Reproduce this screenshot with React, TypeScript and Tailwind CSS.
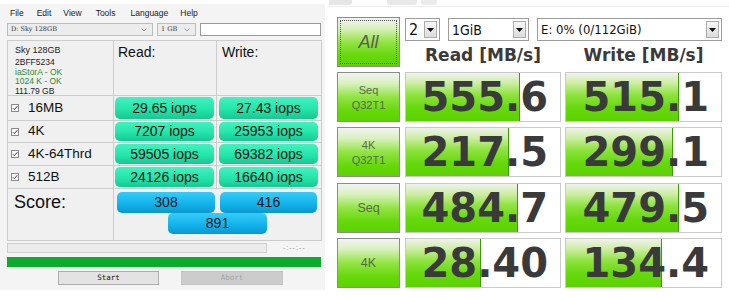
import React from "react";

const teal =
  "bg-[linear-gradient(to_bottom,#40f3c0_0%,#24e5aa_55%,#16c892_100%)]";
const blue =
  "bg-[linear-gradient(to_bottom,#34cdf9_0%,#14b3ec_55%,#0899cf_100%)]";

function Check() {
  return (
    <svg width="8" height="8" viewBox="0 0 8 8" className="shrink-0">
      <rect x="0.5" y="0.5" width="7" height="7" fill="#fafafa" stroke="#8a8a8a" />
      <path d="M1.8 4.2 L3.3 5.7 L6.3 2.2" fill="none" stroke="#444" strokeWidth="1" />
    </svg>
  );
}

function IopsBtn({ v }: { v: string }) {
  return (
    <div
      className={`h-full w-full rounded-[5px] ${teal} flex items-center justify-center text-[14px] text-[#111] font-['Liberation_Sans',sans-serif]`}
    >
      {v}
    </div>
  );
}

function LeftPanel() {
  const rows = [
    { l: "16MB", r: "29.65 iops", w: "27.43 iops" },
    { l: "4K", r: "7207 iops", w: "25953 iops" },
    { l: "4K-64Thrd", r: "59505 iops", w: "69382 iops" },
    { l: "512B", r: "24126 iops", w: "16640 iops" },
  ];
  return (
    <div className="w-[329px] h-[298px] shrink-0 bg-white">
      <div className="mt-[4px] w-[325px] h-[286px] bg-[#f4f4f4] flex flex-col font-['Liberation_Sans',sans-serif]">
        <div className="h-[18px] flex items-center pl-[10px] text-[8.5px] text-[#222]">
          <span>File</span>
          <span className="ml-[13px]">Edit</span>
          <span className="ml-[12px]">View</span>
          <span className="ml-[14px]">Tools</span>
          <span className="ml-[15px]">Language</span>
          <span className="ml-[12px]">Help</span>
        </div>
        <div className="mt-[1px] h-[13px] flex ml-[7px]">
          <div className="w-[146px] h-full bg-[#ececec] border border-[#bdbdbd] flex items-center justify-between pl-[3px] pr-[5px]">
            <span className="text-[6.5px] text-[#333] font-['DejaVu_Serif',serif]">D: Sky 128GB</span>
            <svg width="6" height="4" viewBox="0 0 6 4"><path d="M0.5 0.5 L3 3 L5.5 0.5" fill="none" stroke="#888" strokeWidth="0.8" /></svg>
          </div>
          <div className="ml-[4px] w-[39px] h-full bg-[#ececec] border border-[#bdbdbd] flex items-center justify-between pl-[3px] pr-[5px]">
            <span className="text-[6.5px] text-[#333] font-['DejaVu_Serif',serif]">1 GB</span>
            <svg width="6" height="4" viewBox="0 0 6 4"><path d="M0.5 0.5 L3 3 L5.5 0.5" fill="none" stroke="#888" strokeWidth="0.8" /></svg>
          </div>
          <div className="ml-[4px] w-[121px] h-full bg-white border border-[#9a9a9a]" />
        </div>
        <div className="mt-[4px] ml-[7px] w-[315px] grid grid-cols-[105px_102px_104px] grid-rows-[54px_24px_21px_22px_22px_51px] gap-px p-px bg-[#cdcdcd]">
          <div className="bg-[#f0f0f0] pl-[7px] pt-[4px] text-[8.5px] leading-[9.5px] text-[#222]">
            <div className="text-[9px] leading-[11px]">Sky 128GB</div>
            <div className="mt-[2px]">2BFF5234</div>
            <div className="text-[#2d8a2d]">iaStorA - OK</div>
            <div className="text-[#2d8a2d]">1024 K - OK</div>
            <div>111.79 GB</div>
          </div>
          <div className="bg-[#f0f0f0] pl-[4px] pt-[3px] text-[14px] leading-[16px] text-[#111]">Read:</div>
          <div className="bg-[#f0f0f0] pl-[5px] pt-[3px] text-[14px] leading-[16px] text-[#111]">Write:</div>
          {rows.map((r) => (
            <React.Fragment key={r.l}>
              <div className="bg-[#f0f0f0] flex items-center pl-[3px] gap-[9px] text-[13.5px] text-[#111]">
                <Check />
                <span>{r.l}</span>
              </div>
              <div className="bg-[#f0f0f0] pt-[1px] pb-[1px] pl-[1px] pr-[2px]">
                <IopsBtn v={r.r} />
              </div>
              <div className="bg-[#f0f0f0] pt-[1px] pb-[1px] pl-[2px] pr-[3px]">
                <IopsBtn v={r.w} />
              </div>
            </React.Fragment>
          ))}
          <div className="bg-[#f0f0f0] pl-[6px] pt-[4px] text-[18px] leading-[18px] text-[#111]">Score:</div>
          <div className="col-span-2 bg-[#f0f0f0] pt-[3px] pl-[3px] flex flex-col">
            <div className="flex gap-[5px]">
              <div className={`w-[98px] h-[21px] rounded-[5px] ${blue} flex items-center justify-center text-[14px] text-[#111]`}>308</div>
              <div className={`w-[97px] h-[21px] rounded-[5px] ${blue} flex items-center justify-center text-[14px] text-[#111]`}>416</div>
            </div>
            <div className={`ml-[51px] w-[99px] h-[21px] rounded-[5px] ${blue} flex items-center justify-center text-[14px] text-[#111]`}>891</div>
          </div>
        </div>
        <div className="mt-[2px] ml-[7px] h-[10px] flex items-center">
          <div className="w-[260px] h-full bg-[#ebebeb] border border-[#cfcfcf]" />
          <span className="ml-[16px] text-[7px] text-[#9a9a9a] tracking-[1px]">-:--:--</span>
        </div>
        <div className="mt-[4px] ml-[7px] w-[314px] h-[10px] bg-[#0cab2c]" />
        <div className="mt-[4px] h-[14px] flex">
          <div className="ml-[58px] w-[101px] h-full bg-[#e3e3e3] border border-[#adadad] flex items-center justify-center text-[7.5px] text-[#111] font-['DejaVu_Sans_Mono',monospace]">Start</div>
          <div className="ml-[22px] w-[102px] h-full bg-[#cccccc] border border-[#c4c4c4] flex items-center justify-center text-[7.5px] text-[#a4a4a4] font-['DejaVu_Sans_Mono',monospace]">Abort</div>
        </div>
      </div>
    </div>
  );
}

const btnGrad =
  "bg-[linear-gradient(to_bottom,#f3f3f3_0%,#d8f1bd_22%,#92e444_50%,#66d80c_78%,#5cd300_100%)]";
const fillGrad =
  "bg-[linear-gradient(to_bottom,#f0f2ec_0%,#cfeea8_20%,#8fe340_45%,#66d90c_72%,#5bd200_100%)]";

function Arrow() {
  return (
    <div className="w-[13px] h-full border border-[#adadad] bg-[linear-gradient(to_bottom,#f7f7f7,#dcdcdc)] flex items-center justify-center">
      <svg width="7" height="4" viewBox="0 0 7 4"><path d="M0 0 L7 0 L3.5 4 Z" fill="#111" /></svg>
    </div>
  );
}

function Drop({ w, text, size }: { w: string; text: string; size: string }) {
  return (
    <div className={`${w} h-[23px] bg-white border border-[#9c9c9c] flex items-center justify-between pl-[3px] pr-[2px] py-[2px]`}>
      <span className={`${size} text-[#111] font-['DejaVu_Sans_Condensed','Liberation_Sans',sans-serif] leading-none`}>{text}</span>
      <Arrow />
    </div>
  );
}

function LabelBtn({ a, b, big }: { a: string; b?: string; big?: boolean }) {
  return (
    <div className={`w-[63px] h-full border border-[#8c8c8c] ${btnGrad} flex flex-col items-center justify-center text-[#566a48] font-['Liberation_Sans',sans-serif]`}>
      <span className={big ? "text-[12.5px] leading-[14px]" : "text-[11px] leading-[14px]"}>{a}</span>
      {b && <span className="text-[11px] leading-[14px] mt-[1px]">{b}</span>}
    </div>
  );
}

function ValBox({ v, pct, w }: { v: string; pct: number; w: string }) {
  return (
    <div className={`${w} h-full bg-white border border-[#cacaca] relative overflow-hidden`}>
      <div
        className={`absolute left-0 top-0 bottom-0 ${fillGrad} border-r border-[#3c9c00]`}
        style={{ width: `${pct}%` }}
      />
      <div className="relative h-full flex items-center justify-end pr-[12px] text-[40px] leading-none font-bold text-[#3a3a3a] font-['DejaVu_Sans',sans-serif]">
        {v}
      </div>
    </div>
  );
}

function RightPanel() {
  const rows = [
    { a: "Seq", b: "Q32T1", r: "555.6", rp: 74, w: "515.1", wp: 73 },
    { a: "4K", b: "Q32T1", r: "217.5", rp: 67, w: "299.1", wp: 69 },
    { a: "Seq", r: "484.7", rp: 73, w: "479.5", wp: 73, big: true },
    { a: "4K", r: "28.40", rp: 49, w: "134.4", wp: 62, big: true },
  ];
  return (
    <div className="w-[400px] h-[298px] bg-white flex flex-col">
      <div className="h-[7px] flex items-start border-b border-[#ececec]">
        <div className="w-[23px] h-[5px] bg-[#e6e6e6] rounded-br-[3px]" />
        <div className="ml-[35px] w-[30px] h-[5px] bg-[#e8e8e8] rounded-b-[3px]" />
        <div className="ml-[4px] w-[16px] h-[5px] bg-[#ebebeb] rounded-b-[3px]" />
      </div>
      <div className="mt-[10px] ml-[8px] flex">
        <div className={`w-[63px] h-[50px] border border-[#8c8c8c] ${btnGrad} p-[2px]`}>
          <div className="w-full h-full border border-dotted border-[#555] flex items-center justify-center">
            <span className="italic text-[18px] text-[#5a5a5a] font-['Liberation_Sans',sans-serif]">All</span>
          </div>
        </div>
        <div className="ml-[5px] w-[317px] flex flex-col">
          <div className="mt-[1px] flex">
            <Drop w="w-[35px]" text="2" size="text-[16px]" />
            <div className="ml-[8px]"><Drop w="w-[81px]" text="1GiB" size="text-[14px]" /></div>
            <div className="ml-[8px]"><Drop w="w-[185px]" text="E: 0% (0/112GiB)" size="text-[13px]" /></div>
          </div>
          <div className="mt-[4px] h-[22px] flex items-center font-['DejaVu_Sans',sans-serif] font-bold text-[17px] text-[#3a3a3a]">
            <div className="w-[156px] text-center">Read [MB/s]</div>
            <div className="ml-[4px] w-[157px] text-center">Write [MB/s]</div>
          </div>
        </div>
      </div>
      <div className="mt-[5px] ml-[8px] flex flex-col gap-[5.33px]">
        {rows.map((r, i) => (
          <div key={i} className="h-[50px] flex">
            <LabelBtn a={r.a} b={r.b} big={r.big} />
            <div className="ml-[5px] h-full"><ValBox v={r.r} pct={r.rp} w="w-[156px]" /></div>
            <div className="ml-[4px] h-full"><ValBox v={r.w} pct={r.wp} w="w-[157px]" /></div>
          </div>
        ))}
      </div>
    </div>
  );
}

export default function App() {
  return (
    <div className="w-[729px] h-[298px] bg-white flex overflow-hidden">
      <LeftPanel />
      <RightPanel />
    </div>
  );
}
